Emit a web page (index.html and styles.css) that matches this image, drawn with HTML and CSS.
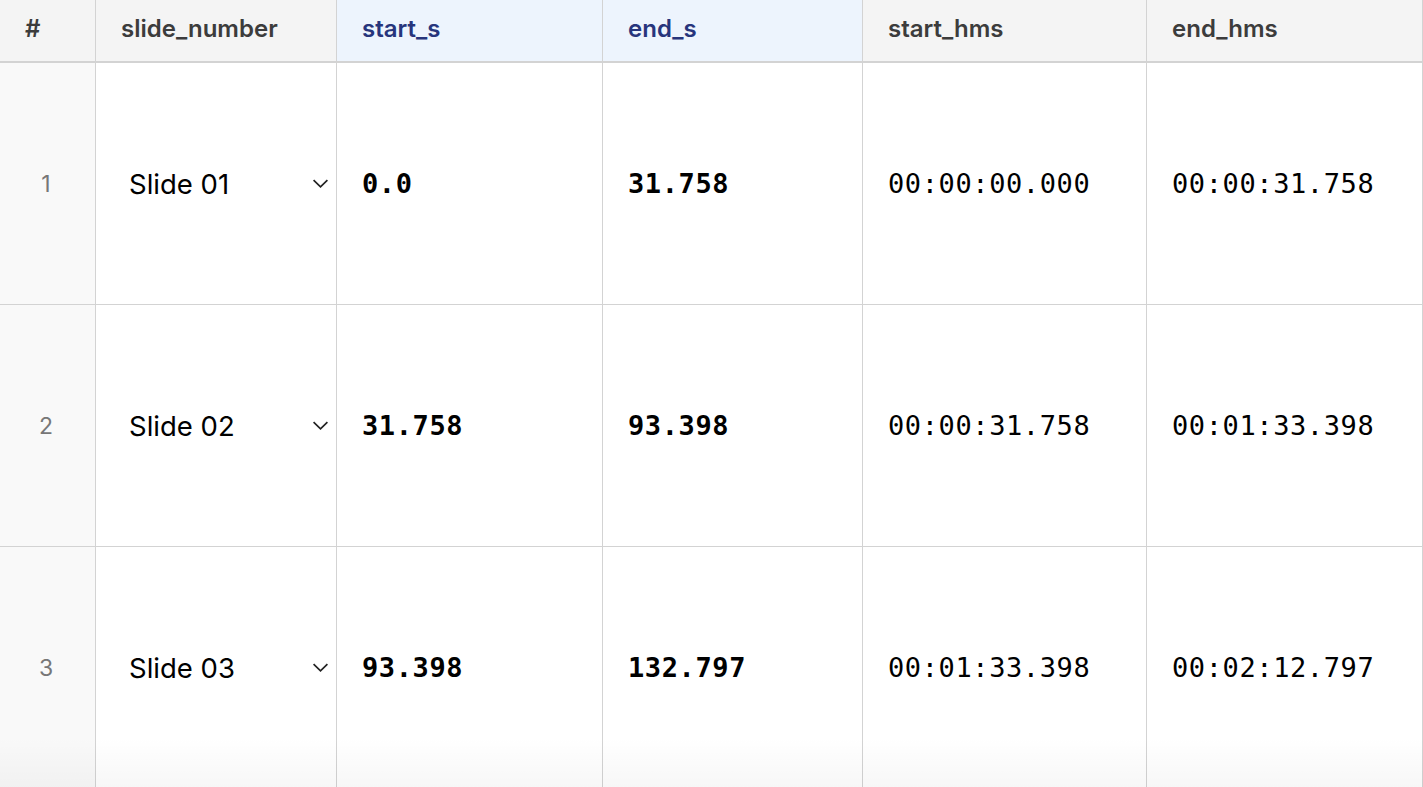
FILE: index.html
```html
<!DOCTYPE html>
<html>
<head>
<meta charset="utf-8">
<link rel="stylesheet" href="styles.css">
</head>
<body>
<div class="grid">
  <div class="row head">
    <div class="cell idx">#</div>
    <div class="cell">slide_number</div>
    <div class="cell hl">start_s</div>
    <div class="cell hl">end_s</div>
    <div class="cell">start_hms</div>
    <div class="cell">end_hms</div>
  </div>
  <div class="row">
    <div class="cell idx">1</div>
    <div class="cell sel"><span>Slide 01</span><svg class="chev" viewBox="0 0 16 10"><path d="M1.5 1.8 L8 8.2 L14.5 1.8"/></svg></div>
    <div class="cell num">0.0</div>
    <div class="cell num">31.758</div>
    <div class="cell hms">00:00:00.000</div>
    <div class="cell hms">00:00:31.758</div>
  </div>
  <div class="row">
    <div class="cell idx">2</div>
    <div class="cell sel"><span>Slide 02</span><svg class="chev" viewBox="0 0 16 10"><path d="M1.5 1.8 L8 8.2 L14.5 1.8"/></svg></div>
    <div class="cell num">31.758</div>
    <div class="cell num">93.398</div>
    <div class="cell hms">00:00:31.758</div>
    <div class="cell hms">00:01:33.398</div>
  </div>
  <div class="row">
    <div class="cell idx">3</div>
    <div class="cell sel"><span>Slide 03</span><svg class="chev" viewBox="0 0 16 10"><path d="M1.5 1.8 L8 8.2 L14.5 1.8"/></svg></div>
    <div class="cell num">93.398</div>
    <div class="cell num">132.797</div>
    <div class="cell hms">00:01:33.398</div>
    <div class="cell hms">00:02:12.797</div>
  </div>
  <div class="fade"></div>
</div>
</body>
</html>
```
FILE: styles.css
```css
html, body {
  margin: 0;
  padding: 0;
  background: #ffffff;
  overflow: hidden;
}
.grid {
  position: relative;
  width: 1423px;
  height: 787px;
  overflow: hidden;
  font-family: Inter, "Noto Sans", sans-serif;
}
.row {
  display: grid;
  grid-template-columns: 96px 241px 266px 260px 284px 1fr;
  height: 242px;
  border-bottom: 1px solid #d3d3d3;
  box-sizing: border-box;
}
.row.head {
  height: 63px;
  border-bottom: 2px solid #d3d3d3;
  background: #f4f4f4;
}
.cell {
  display: flex;
  align-items: center;
  padding-left: 25px;
  border-right: 1px solid #d3d3d3;
  box-sizing: border-box;
  color: #000;
  white-space: nowrap;
  overflow: hidden;
}
.head .cell {
  font-size: 24px;
  font-weight: 600;
  color: #3c3c3c;
  padding-bottom: 5px;
}
.head .cell.hl {
  background: #edf4fd;
  color: #27357c;
}
.cell.idx {
  justify-content: center;
  padding-left: 0;
  padding-right: 3px;
  background: #f9f9f9;
  color: #777777;
  font-size: 23px;
}
.head .cell.idx {
  justify-content: flex-start;
  padding-left: 25px;
  background: #f4f4f4;
  color: #3c3c3c;
  font-size: 24px;
}
.cell.sel {
  padding-left: 33px;
  padding-right: 7px;
  justify-content: space-between;
  font-size: 27.5px;
}
.chev {
  width: 17px;
  height: 11px;
  fill: none;
  stroke: #222;
  stroke-width: 1.6;
}
.cell.num {
  font-family: "DejaVu Sans Mono", monospace;
  font-weight: bold;
  font-size: 27px;
  letter-spacing: 0.6px;
}
.cell.hms {
  font-family: "DejaVu Sans Mono", monospace;
  font-size: 27px;
  letter-spacing: 0.6px;
}
.fade {
  position: absolute;
  left: 0;
  right: 0;
  bottom: 0;
  height: 50px;
  background: linear-gradient(to bottom, rgba(0,0,0,0), rgba(0,0,0,0.03));
  pointer-events: none;
}
```
